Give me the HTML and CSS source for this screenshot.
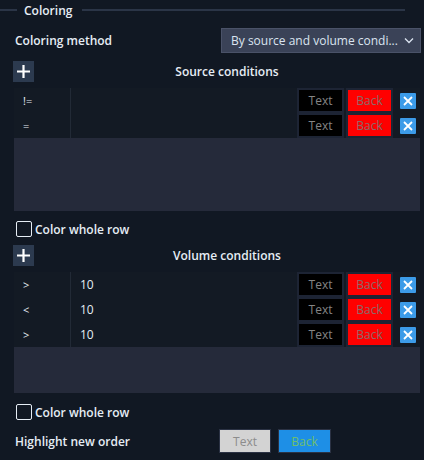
FILE: index.html
```html
<!DOCTYPE html>
<html>
<head>
<meta charset="utf-8">
<link rel="stylesheet" href="styles.css">
</head>
<body>
<div class="panel">
  <div class="legend"><span class="line short"></span><span class="legend-text">Coloring</span><span class="line long"></span></div>

  <div class="method-row">
    <span class="label">Coloring method</span>
    <div class="select"><span>By source and volume condi...</span>
      <svg class="chev" width="10" height="7" viewBox="0 0 10 7"><path d="M1 1.5 L5 5.5 L9 1.5" fill="none" stroke="#dbe4f0" stroke-width="1.3"/></svg>
    </div>
  </div>

  <div class="cond-head">
    <div class="plus"><svg width="21" height="21" viewBox="0 0 21 21"><path d="M10.5 4 V17 M4 10.5 H17" stroke="#fff" stroke-width="2.2"/></svg></div>
    <span class="cond-title">Source conditions</span>
  </div>

  <div class="table">
    <div class="trow">
      <div class="op">!=</div><div class="val"></div>
      <div class="btn-text">Text</div><div class="btn-back">Back</div>
      <div class="x"><svg width="16" height="16" viewBox="0 0 16 16"><path d="M4 4 L12 12 M12 4 L4 12" stroke="#fff" stroke-width="1.8"/></svg></div>
    </div>
    <div class="trow">
      <div class="op">=</div><div class="val"></div>
      <div class="btn-text">Text</div><div class="btn-back">Back</div>
      <div class="x"><svg width="16" height="16" viewBox="0 0 16 16"><path d="M4 4 L12 12 M12 4 L4 12" stroke="#fff" stroke-width="1.8"/></svg></div>
    </div>
    <div class="empty"></div>
  </div>

  <label class="check-row"><span class="box"></span><span>Color whole row</span></label>

  <div class="cond-head">
    <div class="plus"><svg width="21" height="21" viewBox="0 0 21 21"><path d="M10.5 4 V17 M4 10.5 H17" stroke="#fff" stroke-width="2.2"/></svg></div>
    <span class="cond-title">Volume conditions</span>
  </div>

  <div class="table">
    <div class="trow">
      <div class="op">&gt;</div><div class="val">10</div>
      <div class="btn-text">Text</div><div class="btn-back">Back</div>
      <div class="x"><svg width="16" height="16" viewBox="0 0 16 16"><path d="M4 4 L12 12 M12 4 L4 12" stroke="#fff" stroke-width="1.8"/></svg></div>
    </div>
    <div class="trow">
      <div class="op">&lt;</div><div class="val">10</div>
      <div class="btn-text">Text</div><div class="btn-back">Back</div>
      <div class="x"><svg width="16" height="16" viewBox="0 0 16 16"><path d="M4 4 L12 12 M12 4 L4 12" stroke="#fff" stroke-width="1.8"/></svg></div>
    </div>
    <div class="trow">
      <div class="op">&gt;</div><div class="val">10</div>
      <div class="btn-text">Text</div><div class="btn-back">Back</div>
      <div class="x"><svg width="16" height="16" viewBox="0 0 16 16"><path d="M4 4 L12 12 M12 4 L4 12" stroke="#fff" stroke-width="1.8"/></svg></div>
    </div>
    <div class="empty short"></div>
  </div>

  <label class="check-row second"><span class="box"></span><span>Color whole row</span></label>

  <div class="highlight-row">
    <span class="label">Highlight new order</span>
    <div class="hl-text">Text</div>
    <div class="hl-back">Back</div>
  </div>
</div>
</body>
</html>
```
FILE: styles.css
```css
* { box-sizing: border-box; }
html, body { margin: 0; padding: 0; }
body {
  background: #111823;
  color: #e6edf5;
  font-family: "Open Sans", "Noto Sans", sans-serif;
  font-size: 12px;
  font-weight: 600;
  width: 424px;
  height: 460px;
  overflow: hidden;
}
.panel { padding: 0 4px 0 14px; }
.legend {
  display: flex;
  align-items: center;
  height: 20px;
  margin-left: -14px;
  margin-right: 15px;
}
.line { height: 2px; background: #2b3547; }
.line.short { width: 17px; }
.line.long { flex: 1; }
.legend-text { padding: 0 10px 0 7px; color: #e6edf5; }

.method-row {
  display: flex;
  align-items: center;
  justify-content: space-between;
  margin-top: 8px;
  height: 25px;
}
.method-row .label { padding-left: 1px; }
.select {
  width: 200px;
  height: 25px;
  background: #3a4257;
  border: 1px solid #4a5268;
  display: flex;
  align-items: center;
  justify-content: space-between;
  padding: 0 6px 0 9px;
  font-weight: 400;
  color: #dbe4f0;
  margin-right: -1px;
}
.chev { display: block; }

.cond-head {
  display: flex;
  align-items: center;
  height: 21px;
  margin-top: 8px;
  margin-left: -1px;
}
.plus {
  width: 21px;
  height: 21px;
  background: #2c3a4f;
}
.plus svg { display: block; }
.cond-title { flex: 1; text-align: center; }

.table { margin-top: 6px; }
.trow {
  display: flex;
  height: 25px;
  background: #131a24;
  align-items: center;
}
.op {
  width: 57px;
  height: 100%;
  padding-left: 9px;
  display: flex;
  align-items: center;
  font-weight: 400;
  font-size: 11px;
  border-right: 1px solid #222a36;
}
.val {
  flex: 1;
  padding-left: 9px;
  font-weight: 400;
  font-size: 12px;
}
.btn-text, .btn-back {
  width: 47px;
  height: 25px;
  border: 2px solid #1d2434;
  display: flex;
  align-items: center;
  justify-content: center;
  font-weight: 400;
  font-size: 12px;
  color: #858585;
}
.btn-text { background: #000; }
.btn-back { background: #ff0000; margin-left: 2px; color: #8a6a6a; }
.x {
  width: 16px;
  height: 16px;
  margin: 0 4px 0 7px;
  background: #3c9be8;
  border-radius: 1px;
}
.x svg { display: block; }
.empty { height: 73px; background: #252a3a; }
.empty.short { height: 46px; }

.check-row {
  display: flex;
  align-items: center;
  height: 16px;
  margin-top: 10px;
  margin-left: 2px;
}
.check-row.second { margin-top: 11px; }
.box {
  width: 16px;
  height: 16px;
  border: 1.5px solid #e6edf5;
  border-radius: 2px;
  margin-right: 3px;
}

.highlight-row {
  display: flex;
  align-items: center;
  height: 24px;
  margin-top: 9px;
  padding-left: 1px;
}
.highlight-row .label { width: 204px; }
.hl-text, .hl-back {
  height: 24px;
  border: 1.5px solid #2b3244;
  display: flex;
  align-items: center;
  justify-content: center;
  font-weight: 400;
}
.hl-text { width: 52px; background: #d3d3d3; color: #8c8c8c; }
.hl-back { width: 53px; margin-left: 7px; background: #1e8fe6; color: #6fbf6a; }
```
